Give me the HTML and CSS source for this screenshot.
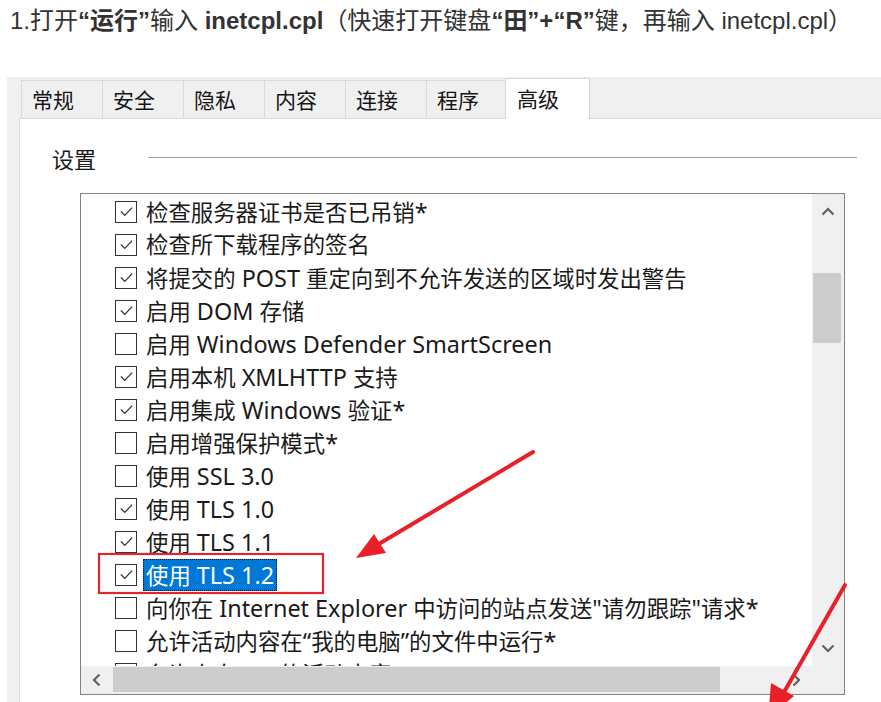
FILE: index.html
```html
<!DOCTYPE html>
<html lang="zh-CN">
<head>
<meta charset="utf-8">
<title>Internet 选项 - 高级</title>
<link rel="stylesheet" href="styles.css">
</head>
<body>
<p class="intro">1.打开<strong>“运行”</strong>输入 <strong>inetcpl.cpl</strong>（快速打开键盘<strong>“田”+“R”</strong>键，再输入 inetcpl.cpl）</p>

<div class="dialog">
  <div class="tabs">
    <div class="tab">常规</div>
    <div class="tab">安全</div>
    <div class="tab">隐私</div>
    <div class="tab">内容</div>
    <div class="tab">连接</div>
    <div class="tab">程序</div>
    <div class="tab active">高级</div>
  </div>
  <div class="panel">
    <div class="group">
      <span class="group-label">设置</span>
      <span class="group-line"></span>
    </div>
    <div class="listbox">
      <div class="items">
        <div class="row"><span class="cb on"><svg viewBox="0 0 22 22"><polyline points="4.5,11 9,15.5 17.5,6.5"/></svg></span><span class="label">检查服务器证书是否已吊销<span class="en">*</span></span></div>
        <div class="row"><span class="cb on"><svg viewBox="0 0 22 22"><polyline points="4.5,11 9,15.5 17.5,6.5"/></svg></span><span class="label">检查所下载程序的签名</span></div>
        <div class="row"><span class="cb on"><svg viewBox="0 0 22 22"><polyline points="4.5,11 9,15.5 17.5,6.5"/></svg></span><span class="label">将提交的<span class="en"> POST </span>重定向到不允许发送的区域时发出警告</span></div>
        <div class="row"><span class="cb on"><svg viewBox="0 0 22 22"><polyline points="4.5,11 9,15.5 17.5,6.5"/></svg></span><span class="label">启用<span class="en"> DOM </span>存储</span></div>
        <div class="row"><span class="cb"></span><span class="label">启用<span class="en"> Windows Defender SmartScreen</span></span></div>
        <div class="row"><span class="cb on"><svg viewBox="0 0 22 22"><polyline points="4.5,11 9,15.5 17.5,6.5"/></svg></span><span class="label">启用本机<span class="en"> XMLHTTP </span>支持</span></div>
        <div class="row"><span class="cb on"><svg viewBox="0 0 22 22"><polyline points="4.5,11 9,15.5 17.5,6.5"/></svg></span><span class="label">启用集成<span class="en"> Windows </span>验证<span class="en">*</span></span></div>
        <div class="row"><span class="cb"></span><span class="label">启用增强保护模式<span class="en">*</span></span></div>
        <div class="row"><span class="cb"></span><span class="label">使用<span class="en"> SSL 3.0</span></span></div>
        <div class="row"><span class="cb on"><svg viewBox="0 0 22 22"><polyline points="4.5,11 9,15.5 17.5,6.5"/></svg></span><span class="label">使用<span class="en"> TLS 1.0</span></span></div>
        <div class="row"><span class="cb on"><svg viewBox="0 0 22 22"><polyline points="4.5,11 9,15.5 17.5,6.5"/></svg></span><span class="label">使用<span class="en"> TLS 1.1</span></span></div>
        <div class="row selected"><span class="cb on"><svg viewBox="0 0 22 22"><polyline points="4.5,11 9,15.5 17.5,6.5"/></svg></span><span class="label">使用<span class="en"> TLS 1.2</span></span></div>
        <div class="row"><span class="cb"></span><span class="label">向你在<span class="en"> Internet Explorer </span>中访问的站点发送<span class="en">"</span>请勿跟踪<span class="en">"</span>请求<span class="en">*</span></span></div>
        <div class="row"><span class="cb"></span><span class="label">允许活动内容在<span class="en">“</span>我的电脑<span class="en">”</span>的文件中运行<span class="en">*</span></span></div>
        <div class="row partial"><span class="cb"></span><span class="label">允许来自<span class="en"> CD </span>的活动内容</span></div>
      </div>
      <div class="vscroll">
        <div class="vbtn"><svg viewBox="0 0 16 16"><polyline points="2.5,10.5 8,5 13.5,10.5"/></svg></div>
        <div class="vthumb"></div>
        <div class="vbtn down"><svg viewBox="0 0 16 16"><polyline points="2.5,5.5 8,11 13.5,5.5"/></svg></div>
      </div>
      <div class="hscroll">
        <div class="hbtn"><svg viewBox="0 0 16 16"><polyline points="10.5,2.5 5,8 10.5,13.5"/></svg></div>
        <div class="hthumb"></div>
        <div class="hbtn right"><svg viewBox="0 0 16 16"><polyline points="5.5,2.5 11,8 5.5,13.5"/></svg></div>
      </div>
      <div class="corner"></div>
    </div>
  </div>
</div>

<svg class="marks" viewBox="0 0 881 702" width="881" height="702">
  <rect x="99" y="554" width="224" height="39" class="mark-box"/>
  <line x1="533" y1="452" x2="378" y2="544.5" class="mark-line"/>
  <polygon points="356,558 386,553 374,534" class="mark-head"/>
  <line x1="845" y1="585" x2="783" y2="694" class="mark-line"/>
  <polygon points="768,718 794,696 771,683" class="mark-head"/>
</svg>
</body>
</html>
```

FILE: styles.css
```css
* {
  box-sizing: border-box;
}

html,
body {
  margin: 0;
  padding: 0;
}

body {
  width: 881px;
  height: 702px;
  overflow: hidden;
  position: relative;
  background: #ffffff;
  font-family: "Liberation Sans", "Noto Sans CJK SC", sans-serif;
}

.intro {
  margin: 0;
  padding-left: 10px;
  height: 42px;
  line-height: 42px;
  font-size: 24px;
  color: #333333;
  white-space: nowrap;
}

.intro strong {
  font-weight: 700;
}

.dialog {
  margin: 35px 0 0 7px;
  height: 625px;
  background: #f0f0f0;
  padding: 3px 0 0 12px;
  display: flex;
  flex-direction: column;
}

.tabs {
  display: flex;
  align-items: flex-end;
  height: 38px;
  padding-left: 2px;
  position: relative;
  z-index: 1;
  flex: none;
}

.tab {
  width: 82px;
  height: 38px;
  margin-right: -1px;
  border: 1px solid #d9d9d9;
  border-bottom: 0;
  padding-left: 10px;
  font-family: "Noto Sans CJK SC", sans-serif;
  font-size: 21px;
  line-height: 37px;
  color: #161616;
  background: #f0f0f0;
}

.tab.active {
  width: 85px;
  height: 41px;
  margin-left: -2px;
  margin-bottom: -1px;
  padding-left: 11px;
  line-height: 38px;
  background: #ffffff;
}

.panel {
  flex: 1;
  background: #ffffff;
  border-top: 1px solid #d9d9d9;
  border-left: 1px solid #d9d9d9;
  font-family: "Noto Sans", "Noto Sans CJK SC", sans-serif;
}

.group {
  display: flex;
  align-items: center;
  height: 28px;
  margin-top: 25px;
  padding-left: 32px;
}

.group-label {
  font-family: "Noto Sans CJK SC", sans-serif;
  font-size: 22px;
  color: #1a1a1a;
}

.group-line {
  flex: 1;
  margin-left: 52px;
  margin-right: 24px;
  border-top: 1px solid #a0a0a0;
  border-bottom: 1px solid #ffffff;
}

.listbox {
  margin: 21px 0 0 60px;
  width: 765px;
  height: 502px;
  border: 1px solid #828282;
  display: grid;
  grid-template-columns: 1fr 32px;
  grid-template-rows: 1fr 28px;
}

.items {
  overflow: hidden;
  padding-top: 1px;
  min-height: 0;
}

.row {
  height: 33px;
  display: flex;
  align-items: center;
  padding-left: 34px;
  white-space: nowrap;
  font-size: 22.4px;
  color: #1a1a1a;
}

.cb {
  flex: none;
  width: 22px;
  height: 22px;
  border: 1.5px solid #333333;
  background: #ffffff;
  display: flex;
  align-items: center;
  justify-content: center;
}

.cb svg {
  width: 19px;
  height: 19px;
  fill: none;
  stroke: #333333;
  stroke-width: 1.5;
}

.label {
  margin-left: 6px;
  padding: 0 3px;
  height: 32px;
  line-height: 32px;
}

.en {
  font-size: 23.4px;
  white-space: pre;
}

.row.selected .label {
  background: #0078d7;
  color: #ffffff;
  outline: 1px dotted #1a1a1a;
  outline-offset: -1px;
}

.vscroll {
  background: #f0f0f0;
  display: flex;
  flex-direction: column;
  min-height: 0;
}

.vbtn {
  height: 36px;
  display: flex;
  align-items: center;
  justify-content: center;
  flex: none;
}

.vbtn.down {
  margin-top: auto;
}

.vscroll svg,
.hscroll svg {
  width: 16px;
  height: 16px;
  fill: none;
  stroke: #606060;
  stroke-width: 2.2;
}

.vthumb {
  margin: 43px 3px 0 1px;
  height: 70px;
  background: #cdcdcd;
  flex: none;
}

.hscroll {
  background: #f0f0f0;
  display: flex;
  align-items: center;
}

.hbtn {
  width: 32px;
  height: 28px;
  display: flex;
  align-items: center;
  justify-content: center;
  flex: none;
}

.hbtn.right {
  margin-left: auto;
}

.hthumb {
  width: 607px;
  height: 25px;
  background: #cdcdcd;
  margin-top: -1px;
}

.corner {
  background: #f0f0f0;
}

.marks {
  position: absolute;
  left: 0;
  top: 0;
  pointer-events: none;
}

.mark-box {
  fill: none;
  stroke: #e3262d;
  stroke-width: 2.2;
}

.mark-line {
  stroke: #e8202a;
  stroke-width: 4;
  stroke-linecap: round;
}

.mark-head {
  fill: #e8202a;
}
```
